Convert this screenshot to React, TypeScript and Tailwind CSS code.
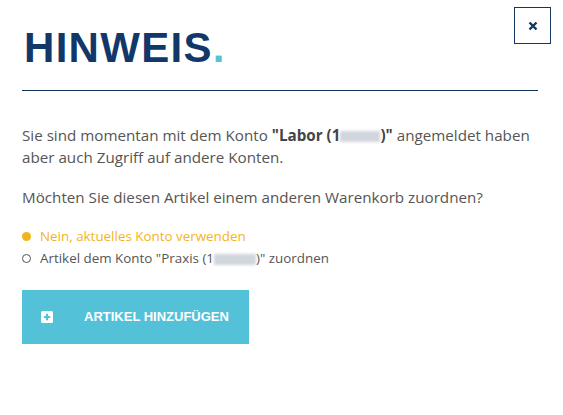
import React from "react";

const Blur = ({ w }: { w: number }) => (
	<span
		className="inline-block align-middle bg-gray-300 blur-[1.5px] h-[11px]"
		style={{ width: w }}
	/>
);

const App = () => {
	return (
		<div className="relative w-[563px] h-[415px] bg-white px-[22px] font-['Open_Sans',sans-serif]">
			<button className="absolute top-[7px] right-[12px] w-[37px] h-[37px] border border-[#14375f] flex items-center justify-center">
				<svg width="10" height="10" viewBox="0 0 10 10">
					<path d="M1.5 1.5L8.5 8.5M8.5 1.5L1.5 8.5" stroke="#14375f" strokeWidth="2.4" />
				</svg>
			</button>

			<h1 className="pt-[27px] pl-[2px] text-[42px] leading-[42px] font-bold tracking-[1.3px] text-[#12386a] font-['Liberation_Sans',sans-serif]">
				HINWEIS<span className="tracking-normal text-[#56c2d8]">.</span>
			</h1>

			<div className="mt-[21px] w-[516px] h-px bg-[#14375f]" />

			<div className="mt-[33px] w-[526px] text-[15.2px] leading-[22px] text-[#555]">
				<p className="mb-[18px]">
					Sie sind momentan mit dem Konto{" "}
					<b className="font-bold text-[#444]">
						"Labor (1<Blur w={40} />)"
					</b>{" "}
					angemeldet haben aber auch Zugriff auf andere Konten.
				</p>
				<p>Möchten Sie diesen Artikel einem anderen Warenkorb zuordnen?</p>
			</div>

			<div className="mt-[17px] text-[13.4px] leading-[22px]">
				<label className="flex items-center gap-[9px] text-[#f3b41b]">
					<span className="w-[9px] h-[9px] rounded-full bg-[#f3b41b]" />
					Nein, aktuelles Konto verwenden
				</label>
				<label className="flex items-center gap-[9px] text-[#555]">
					<span className="w-[9px] h-[9px] rounded-full border border-[#555]" />
					<span>
						Artikel dem Konto "Praxis (1<Blur w={42} />)" zuordnen
					</span>
				</label>
			</div>

			<button className="mt-[21px] w-[227px] h-[54px] bg-[#53c2d9] flex items-center pl-[19px] text-white">
				<svg width="12" height="12" viewBox="0 0 12 12">
					<rect width="12" height="12" rx="1.5" fill="white" />
					<path d="M6 2.8V9.2M2.8 6H9.2" stroke="#53c2d9" strokeWidth="2.2" />
				</svg>
				<span className="ml-[31px] text-[13px] font-bold font-['Liberation_Sans',sans-serif]">
					ARTIKEL HINZUFÜGEN
				</span>
			</button>
		</div>
	);
};

export default App;
